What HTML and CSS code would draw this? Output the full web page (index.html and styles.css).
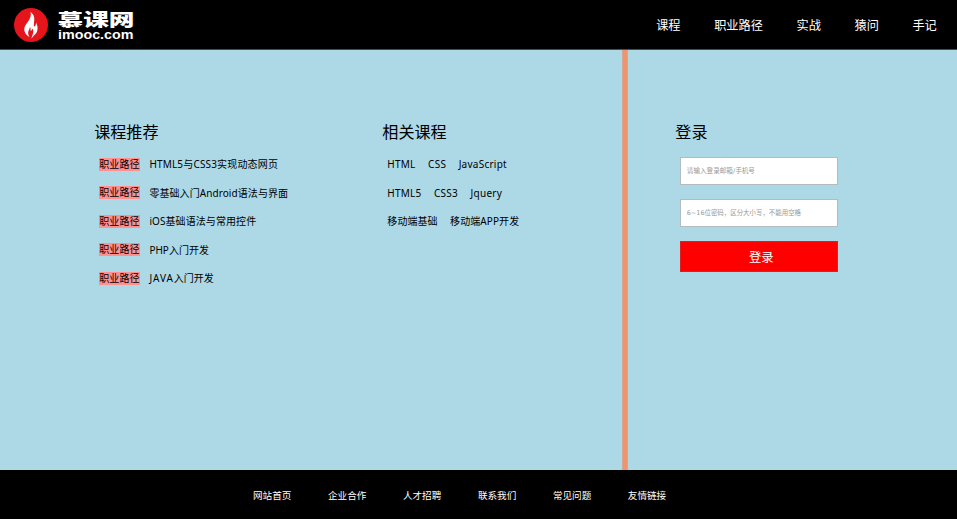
FILE: index.html
```html
<!DOCTYPE html>
<html lang="zh-CN">
<head>
<meta charset="utf-8">
<title>慕课网</title>
<link rel="stylesheet" href="styles.css">
</head>
<body>
<header class="header">
  <a class="logo">
    <svg class="logo-mark" viewBox="0 0 34 34"><circle cx="17" cy="17" r="17" fill="#e5151b"/><path fill="#fff" d="M16.5 4C21 7 20.500 11 20 15C20 17 19.500 18 20.500 18.500C21.500 18 22 16.500 22 14.500C24.500 19 24 24 20.500 27C19.500 28 18.500 29 17.500 30.500C18 27.500 20.500 24 18.500 20.500C18 22 17.500 22.500 16.500 23C16.800 21 16.500 20 16 19C15.500 22 12.500 24 15.500 29C12 27 9.500 23.500 10.500 19.500C11.500 15.500 18.500 10.500 16.500 4Z"/></svg>
    <svg class="logo-name" viewBox="0 0 78 34"><text class="logo-cn" x="-.5" y="18" textLength="77" lengthAdjust="spacingAndGlyphs">慕课网</text><text class="logo-en" x="0" y="30.5" textLength="75.5" lengthAdjust="spacingAndGlyphs">imooc.com</text></svg>
  </a>
  <nav class="nav"><a>课程</a><a>职业路径</a><a>实战</a><a>猿问</a><a>手记</a></nav>
</header>
<main class="main">
  <section class="courses">
    <h2>课程推荐</h2>
    <ul>
      <li><span class="tag">职业路径</span><a class="wide">HTML5与CSS3实现动态网页</a></li>
      <li><span class="tag">职业路径</span><a class="loose">零基础入门Android语法与界面</a></li>
      <li><span class="tag">职业路径</span><a class="loose">iOS基础语法与常用控件</a></li>
      <li><span class="tag">职业路径</span><a>PHP入门开发</a></li>
      <li><span class="tag">职业路径</span><a><span class="java">JAVA</span>入门开发</a></li>
    </ul>
  </section>
  <section class="related">
    <h2>相关课程</h2>
    <ul>
      <li class="latin"><a>HTML</a><a>CSS</a><a>JavaScript</a></li>
      <li class="latin"><a>HTML5</a><a>CSS3</a><a>Jquery</a></li>
      <li class="loose"><a>移动端基础</a><a>移动端APP开发</a></li>
    </ul>
  </section>
  <section class="login">
    <h2>登录</h2>
    <form>
      <input type="text" placeholder="请输入登录邮箱/手机号">
      <input class="password" type="password" placeholder="6~16位密码，区分大小写，不能用空格">
      <button type="button">登录</button>
    </form>
  </section>
</main>
<footer class="footer"><a>网站首页</a><a>企业合作</a><a>人才招聘</a><a>联系我们</a><a>常见问题</a><a>友情链接</a></footer>
</body>
</html>
```
FILE: styles.css
```css
* { box-sizing: border-box; margin: 0; padding: 0; }
body {
  width: 957px;
  height: 519px;
  overflow: hidden;
  display: flex;
  flex-direction: column;
  background: #000;
  color: #000;
  font-family: "Noto Sans", "Noto Sans CJK SC", sans-serif;
}
ul { list-style: none; }
.header {
  height: 50px;
  display: flex;
  align-items: center;
  justify-content: space-between;
  padding: 0 20.2px 0 14px;
  color: #fff;
  border-bottom: 1px solid #405054;
}
.logo { display: flex; gap: 9.5px; align-items: center; }
.logo-mark { width: 34px; height: 34px; display: block; }
.logo-name { width: 78px; height: 34px; display: block; fill: #fff; overflow: visible; }
.logo-cn { font: 900 17.5px "Noto Sans CJK SC", sans-serif; }
.logo-en { font: 700 12.5px "Liberation Sans", sans-serif; }
.nav { display: flex; gap: 33.6px; padding-top: 2px; font-size: 12.2px; line-height: 20px; }
.main { height: 420px; display: flex; background: #add8e6; }
h2 { font-size: 16.1px; font-weight: 400; line-height: 24px; }
.courses { width: 382px; padding: 70px 0 0 94.2px; }
.related {
  width: 245px;
  margin-right: 1px;
  padding: 70px 0 0 .3px;
  border-right: 4px solid #f0946e;
  box-shadow: 1px 0 #d6a594, inset -1px 0 #d6a594;
}
.login { padding: 70px 0 0 47.3px; }
.courses ul, .related ul { padding: 6px 0 0 5px; font-size: 10px; }
li { display: flex; align-items: center; height: 28.5px; line-height: 14px; }
.tag { width: 40.5px; height: 13px; line-height: 13px; background: #ff9090; margin-right: 9.7px; letter-spacing: .1px; }
.wide { letter-spacing: .17px; }
.loose { letter-spacing: .08px; }
.java { letter-spacing: .9px; }
.related li { gap: 12.4px; }
.related .latin { letter-spacing: .25px; gap: 12.5px; }
form { display: flex; flex-direction: column; width: 158px; margin: 13px 0 0 5px; }
input {
  height: 28px;
  margin-bottom: 14px;
  padding: 0 5.5px;
  border: 1px solid #b4bcc0;
  background: #fff;
  font: 6.6px "DejaVu Sans", "Noto Sans CJK SC", sans-serif;
}
.password { font-size: 6.45px; }
input::placeholder { color: #999; opacity: 1; }
button {
  height: 31px;
  border: 1px solid #e02020;
  background: #f00;
  color: #fff;
  font: 12.4px "Noto Sans CJK SC", sans-serif;
  padding-left: 4px;
}
.footer {
  height: 49px;
  display: flex;
  align-items: center;
  gap: 36.6px;
  padding: 2px 0 0 253px;
  color: #fff;
  font-size: 9.6px;
  line-height: 16px;
}
```
